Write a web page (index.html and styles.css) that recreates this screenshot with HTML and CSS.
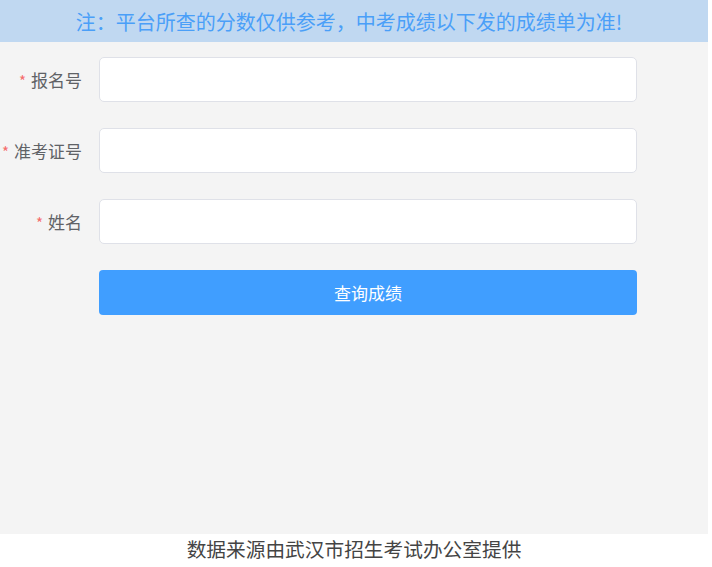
FILE: index.html
```html
<!DOCTYPE html>
<html lang="zh-CN">
<head>
<meta charset="utf-8">
<title>成绩查询</title>
<link rel="stylesheet" href="styles.css">
</head>
<body>
<div class="page">
  <div class="notice">注：平台所查的分数仅供参考，中考成绩以下发的成绩单为准!</div>
  <main class="main">
    <form class="form">
      <div class="row">
        <label class="label"><span class="star">*</span>报名号</label>
        <input class="input" type="text">
      </div>
      <div class="row">
        <label class="label"><span class="star">*</span>准考证号</label>
        <input class="input" type="text">
      </div>
      <div class="row">
        <label class="label"><span class="star">*</span>姓名</label>
        <input class="input" type="text">
      </div>
      <div class="row">
        <span class="label"></span>
        <button class="btn" type="button">查询成绩</button>
      </div>
    </form>
  </main>
  <footer class="footer">数据来源由武汉市招生考试办公室提供</footer>
</div>
</body>
</html>
```
FILE: styles.css
```css
html, body {
  margin: 0;
  padding: 0;
  background: #ffffff;
}
body {
  font-family: "Noto Sans CJK SC", "Noto Sans", "Liberation Sans", sans-serif;
}
.page {
  width: 708px;
}
.notice {
  height: 42px;
  line-height: 43px;
  background: #c0d8f1;
  color: #4a9ff8;
  font-size: 20px;
  text-align: center;
  padding-right: 10px;
  box-sizing: border-box;
}
.main {
  background: #f4f4f4;
  height: 492px;
  box-sizing: border-box;
  padding-top: 15px;
}
.form {
  display: flex;
  flex-direction: column;
  gap: 26px;
}
.row {
  display: flex;
  align-items: center;
  height: 45px;
}
.label {
  width: 99px;
  box-sizing: border-box;
  padding-right: 17px;
  text-align: right;
  font-size: 17px;
  color: #606266;
  flex: none;
}
.star {
  color: #f56c6c;
  margin-right: 5px;
  font-size: 15px;
}
.input {
  width: 538px;
  height: 45px;
  box-sizing: border-box;
  border: 1px solid #dfe1e8;
  border-radius: 5px;
  background: #ffffff;
  outline: none;
  padding: 0 15px;
  font-size: 16px;
}
.btn {
  width: 538px;
  height: 45px;
  border: none;
  border-radius: 4px;
  background: #409eff;
  color: #ffffff;
  font-size: 17px;
  font-family: inherit;
  padding: 0;
}
.footer {
  height: 33px;
  line-height: 30px;
  text-align: center;
  font-size: 19.7px;
  color: #444444;
}
```
